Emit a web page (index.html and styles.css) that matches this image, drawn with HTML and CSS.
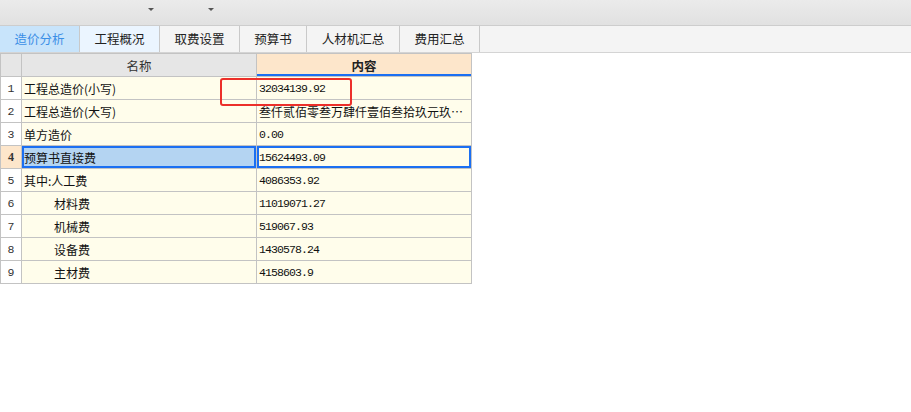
FILE: index.html
```html
<!doctype html>
<html>
<head>
	<meta charset="UTF-8">
	<title>造价分析</title>
	<link rel="stylesheet" href="styles.css">
</head>
<body>
	<div class="topbar">
		<span class="caret caret1"></span>
		<span class="caret caret2"></span>
	</div>
	<ul class="tabs">
		<li class="active w79">造价分析</li>
		<li class="hover w79">工程概况</li>
		<li class="w79">取费设置</li>
		<li class="w66">预算书</li>
		<li class="w92">人材机汇总</li>
		<li class="w79">费用汇总</li>
	</ul>
	<div class="sheet">
		<table class="grid">
			<colgroup>
				<col class="c-no">
				<col class="c-name">
				<col class="c-val">
			</colgroup>
			<tr class="head">
				<th class="no"></th>
				<th>名称</th>
				<th class="cur">内容</th>
			</tr>
			<tr><td class="no">1</td><td>工程总造价(小写)</td><td class="num">32034139.92</td></tr>
			<tr><td class="no">2</td><td>工程总造价(大写)</td><td class="cn">叁仟贰佰零叁万肆仟壹佰叁拾玖元玖角贰分</td></tr>
			<tr><td class="no">3</td><td>单方造价</td><td class="num">0.00</td></tr>
			<tr class="sel"><td class="no">4</td><td class="pick">预算书直接费</td><td class="num focus">15624493.09</td></tr>
			<tr><td class="no">5</td><td>其中:人工费</td><td class="num">4086353.92</td></tr>
			<tr><td class="no">6</td><td class="sub">材料费</td><td class="num">11019071.27</td></tr>
			<tr><td class="no">7</td><td class="sub">机械费</td><td class="num">519067.93</td></tr>
			<tr><td class="no">8</td><td class="sub">设备费</td><td class="num">1430578.24</td></tr>
			<tr><td class="no">9</td><td class="sub">主材费</td><td class="num">4158603.9</td></tr>
		</table>
		<div class="mark"></div>
	</div>
</body>
</html>
```

FILE: styles.css
```css
*{
	margin:0;
	padding:0;
	box-sizing:border-box;
}
ul{
	list-style:none;
}
body{
	font-family:"Noto Sans CJK SC","Liberation Sans",sans-serif;
	font-size:12px;
	color:#222;
	background:#fff;
}
.topbar{
	position:relative;
	height:26px;
	background:linear-gradient(#ebebeb,#e1e1e1);
	border-bottom:1px solid #cdcdcd;
}
.topbar .caret{
	position:absolute;
	top:8px;
	width:0;
	height:0;
	border-left:3px solid transparent;
	border-right:3px solid transparent;
	border-top:3px solid #555;
}
.topbar .caret1{
	left:148px;
}
.topbar .caret2{
	left:208px;
}
.tabs{
	display:flex;
	height:27px;
	background:#f4f4f4;
	border-bottom:1px solid #d4d4d4;
}
.tabs li{
	height:26px;
	line-height:25px;
	text-align:center;
	font-size:12.5px;
	color:#222;
	border-right:1px solid #c9c9c9;
	flex:none;
}
.tabs li.w79{
	width:80px;
}
.tabs li.w66{
	width:67px;
}
.tabs li.w92{
	width:93px;
}
.tabs li.active{
	background:#c8e4fb;
	color:#3a8ee6;
}
.tabs li.hover{
	background:#ebf5ff;
}
.sheet{
	position:relative;
	width:471px;
}
.grid{
	width:471px;
	border-collapse:collapse;
	table-layout:fixed;
}
.grid .c-no{
	width:21px;
}
.grid .c-name{
	width:235px;
}
.grid .c-val{
	width:215px;
}
.grid th,
.grid td{
	height:23px;
	border:1px solid #c3c3c3;
	white-space:nowrap;
	overflow:hidden;
	text-overflow:ellipsis;
}
.grid th{
	background:#e6e6e6;
	font-weight:normal;
	color:#333;
	font-size:12.5px;
}
.grid th.cur{
	background:#fde6cb;
	font-weight:bold;
	color:#222;
	box-shadow:inset 0 -2px 0 #1b6ff2;
}
.grid td{
	background:#fffdeb;
	padding-left:2px;
	color:#111;
}
.grid td.no{
	background:#fff;
	text-align:center;
	padding:0;
	font-family:"Liberation Mono",monospace;
	font-size:11.5px;
	color:#333;
}
.grid tr.sel td.no{
	background:#fde6cb;
	font-weight:bold;
	font-family:"Liberation Serif",serif;
	font-size:12px;
}
.grid td.sub{
	padding-left:32px;
}
.grid td.num{
	font-family:"Liberation Mono",monospace;
	font-size:11.5px;
	letter-spacing:-0.9px;
}
.grid td.pick{
	background:#b4d4f2;
	box-shadow:inset 0 0 0 2px #1b6ff2;
}
.grid td.focus{
	box-shadow:inset 0 0 0 2px #1b6ff2;
}
.mark{
	position:absolute;
	left:220px;
	top:25px;
	width:132px;
	height:28px;
	border:2px solid #ec2f2a;
	border-radius:3px;
}
```
